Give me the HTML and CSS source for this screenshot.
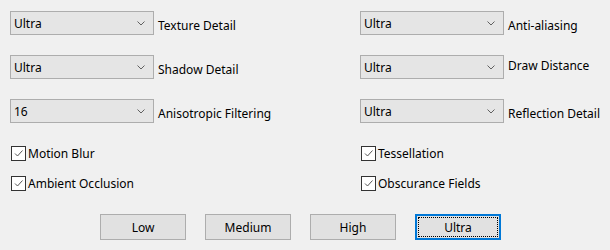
FILE: index.html
```html
<!DOCTYPE html>
<html lang="en">
<head>
  <meta charset="UTF-8" />
  <title>Graphics Settings</title>
  <link rel="stylesheet" href="styles.css">
</head>
<body>
  <div class="panel">
    <div class="settings">
      <div class="row">
        <div class="combo"><span>Ultra</span><svg class="arrow" width="8" height="5" viewBox="0 0 8 5"><path d="M0.5 0.5 L4 4 L7.5 0.5" /></svg></div>
        <label class="low">Texture Detail</label>
      </div>
      <div class="row">
        <div class="combo"><span>Ultra</span><svg class="arrow" width="8" height="5" viewBox="0 0 8 5"><path d="M0.5 0.5 L4 4 L7.5 0.5" /></svg></div>
        <label class="low">Anti-aliasing</label>
      </div>
      <div class="row">
        <div class="combo"><span>Ultra</span><svg class="arrow" width="8" height="5" viewBox="0 0 8 5"><path d="M0.5 0.5 L4 4 L7.5 0.5" /></svg></div>
        <label class="low">Shadow Detail</label>
      </div>
      <div class="row">
        <div class="combo"><span>Ultra</span><svg class="arrow" width="8" height="5" viewBox="0 0 8 5"><path d="M0.5 0.5 L4 4 L7.5 0.5" /></svg></div>
        <label class="high">Draw Distance</label>
      </div>
      <div class="row">
        <div class="combo"><span>16</span><svg class="arrow" width="8" height="5" viewBox="0 0 8 5"><path d="M0.5 0.5 L4 4 L7.5 0.5" /></svg></div>
        <label class="low">Anisotropic Filtering</label>
      </div>
      <div class="row">
        <div class="combo"><span>Ultra</span><svg class="arrow" width="8" height="5" viewBox="0 0 8 5"><path d="M0.5 0.5 L4 4 L7.5 0.5" /></svg></div>
        <label class="low">Reflection Detail</label>
      </div>
    </div>

    <div class="checks">
      <div class="check"><span class="box"><svg width="11" height="11" viewBox="0 0 11 11"><path d="M2 5.5 L4.5 8 L9.5 2.5" /></svg></span>Motion Blur</div>
      <div class="check"><span class="box"><svg width="11" height="11" viewBox="0 0 11 11"><path d="M2 5.5 L4.5 8 L9.5 2.5" /></svg></span>Tessellation</div>
      <div class="check"><span class="box"><svg width="11" height="11" viewBox="0 0 11 11"><path d="M2 5.5 L4.5 8 L9.5 2.5" /></svg></span>Ambient Occlusion</div>
      <div class="check"><span class="box"><svg width="11" height="11" viewBox="0 0 11 11"><path d="M2 5.5 L4.5 8 L9.5 2.5" /></svg></span>Obscurance Fields</div>
    </div>

    <div class="presets">
      <button class="btn">Low</button>
      <button class="btn">Medium</button>
      <button class="btn">High</button>
      <button class="btn focused"><span>Ultra</span></button>
    </div>
  </div>
</body>
</html>
```

FILE: styles.css
```css
body {
  margin: 0;
  background: #f0f0f0;
  font-family: "Segoe UI", "Noto Sans", sans-serif;
  font-size: 12px;
  color: #000;
}

.panel {
  padding: 11px 10px 0 10px;
}

.settings {
  display: grid;
  grid-template-columns: 350px 1fr;
  row-gap: 20px;
}

.row {
  display: flex;
  align-items: center;
  height: 24px;
}

.combo {
  box-sizing: border-box;
  width: 144px;
  height: 24px;
  background: #e5e5e5;
  border: 1px solid #adadad;
  display: flex;
  align-items: center;
  justify-content: space-between;
  padding: 0 8px 0 3px;
}

.combo span {
  line-height: 16px;
  padding-top: 1px;
}

.arrow path {
  fill: none;
  stroke: #606060;
  stroke-width: 1;
}

.row label {
  margin-left: 4px;
}

.row label.low {
  padding-top: 4px;
}

.row label.high {
  padding-bottom: 4px;
}

.checks {
  display: grid;
  grid-template-columns: 350px 1fr;
  row-gap: 14px;
  margin-top: 22px;
  padding-left: 1px;
}

.check {
  display: flex;
  align-items: center;
  height: 16px;
}

.box {
  box-sizing: border-box;
  width: 15px;
  height: 15px;
  border: 1px solid #333;
  background: #fff;
  display: flex;
  align-items: center;
  justify-content: center;
  margin-right: 2px;
}

.box path {
  fill: none;
  stroke: #555;
  stroke-width: 1;
}

.presets {
  display: flex;
  gap: 19px;
  margin-top: 23px;
  padding-left: 90px;
}

.btn {
  box-sizing: border-box;
  width: 86px;
  height: 26px;
  background: #e1e1e1;
  border: 1px solid #adadad;
  font-family: inherit;
  font-size: 12px;
  color: #000;
  padding: 0;
}

.btn.focused {
  border: 2px solid #0078d7;
  padding: 1px;
}

.btn.focused span {
  display: flex;
  align-items: center;
  justify-content: center;
  height: 100%;
  border: 1px dotted #000;
  box-sizing: border-box;
}
```
